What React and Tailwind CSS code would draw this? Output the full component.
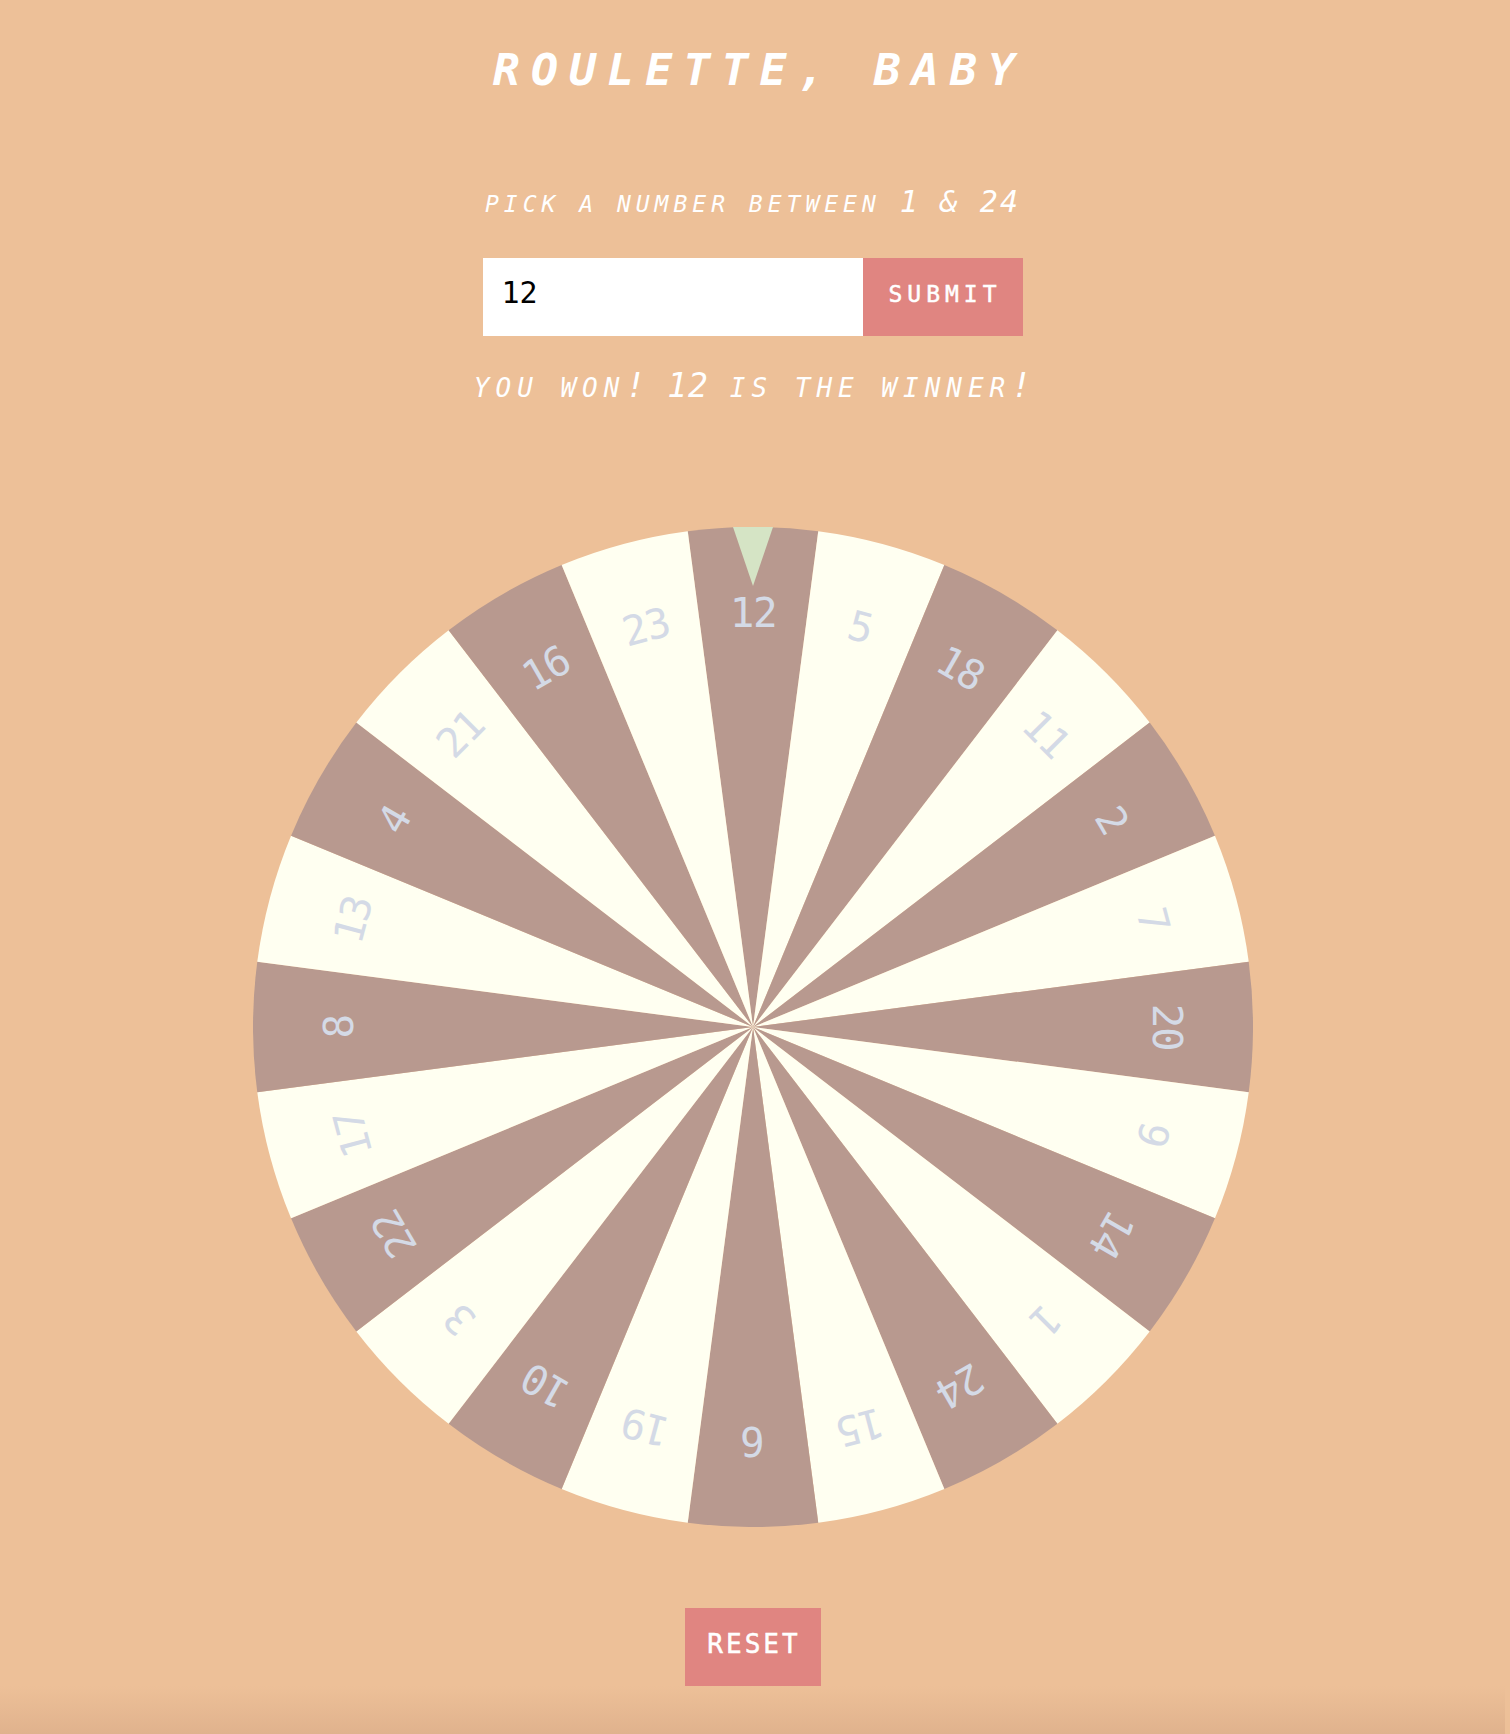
import React, { useState } from 'react';

const numbers = [12, 5, 18, 11, 2, 7, 20, 9, 14, 1, 24, 15, 6, 19, 10, 3, 22, 17, 8, 13, 4, 21, 16, 23];

const mono = { fontFamily: '"DejaVu Sans Mono", "Liberation Mono", monospace' };

const point = (deg, r) => {
  const a = (deg * Math.PI) / 180;
  return [500 + r * Math.sin(a), 500 - r * Math.cos(a)];
};

const Wheel = () => {
  return (
    <svg viewBox="0 0 1000 1000" className="w-full h-full block">
      {numbers.map((n, i) => {
        const [x1, y1] = point(i * 15 - 7.5, 500);
        const [x2, y2] = point(i * 15 + 7.5, 500);
        return (
          <path
            key={'s' + n}
            d={`M500 500 L${x1} ${y1} A500 500 0 0 1 ${x2} ${y2} Z`}
            fill={i % 2 === 0 ? '#b8998f' : '#fffff1'}
          />
        );
      })}
      {numbers.map((n, i) => (
        <text
          key={'t' + n}
          x="500"
          y="100"
          textAnchor="middle"
          fontSize="41"
          letterSpacing="-1.5"
          fill="#d4dae6"
          style={mono}
          transform={`rotate(${i * 15} 500 500)`}
        >
          {n}
        </text>
      ))}
      <polygon points="480,0 520,0 500,59" fill="#d5e4c5" />
    </svg>
  );
};

const App = () => {
  const [guess, setGuess] = useState('12');

  return (
    <div className="min-h-[1734px] bg-[#edc098] text-white pr-[5px] flex flex-col" style={mono}>
      <h1 className="pt-[47px] pl-[14px] text-center text-[45px] leading-[45px] font-bold italic tracking-[11px]">
        ROULETTE, BABY
      </h1>

      <h3 className="mt-[95px] h-[30px] text-center italic font-normal leading-[30px] whitespace-pre">
        <span className="text-[23px] tracking-[5px]">PICK A NUMBER BETWEEN </span>
        <span className="text-[30px] tracking-[2px]">1 &amp; 24</span>
      </h3>

      <form
        onSubmit={(e) => e.preventDefault()}
        className="mt-[41px] flex justify-center"
      >
        <input
          type="text"
          value={guess}
          onChange={(e) => setGuess(e.target.value)}
          className="w-[380px] h-[78px] bg-white text-black text-[30px] pl-[19px] pb-[10px] outline-none"
          style={mono}
        />
        <button
          type="submit"
          className="w-[160px] h-[78px] bg-[#e08581] text-white text-[23px] tracking-[5px] pl-[5px] pb-[6px] [-webkit-text-stroke:0.5px_white]"
          style={mono}
        >
          SUBMIT
        </button>
      </form>

      <h3 className="mt-[34px] h-[32px] text-center italic font-normal leading-[32px] whitespace-pre">
        <span className="text-[26px] tracking-[6px]">YOU WON</span>
        <span className="text-[33px] tracking-[1px]">! 12 </span>
        <span className="text-[26px] tracking-[6px]">IS THE WINNER</span>
        <span className="text-[33px]">!</span>
      </h3>

      <div className="mt-[125px] w-[1000px] h-[1000px] mx-auto">
        <Wheel />
      </div>

      <div className="mt-[81px] flex justify-center">
        <button
          className="w-[136px] h-[78px] bg-[#e08581] text-white text-[26px] tracking-[3px] pl-[3px] pb-[6px] [-webkit-text-stroke:0.5px_white]"
          style={mono}
        >
          RESET
        </button>
      </div>

      <div className="mt-auto h-[48px] bg-gradient-to-b from-[#edc098] to-[#e0b28d]" />
    </div>
  );
};

export default App;
